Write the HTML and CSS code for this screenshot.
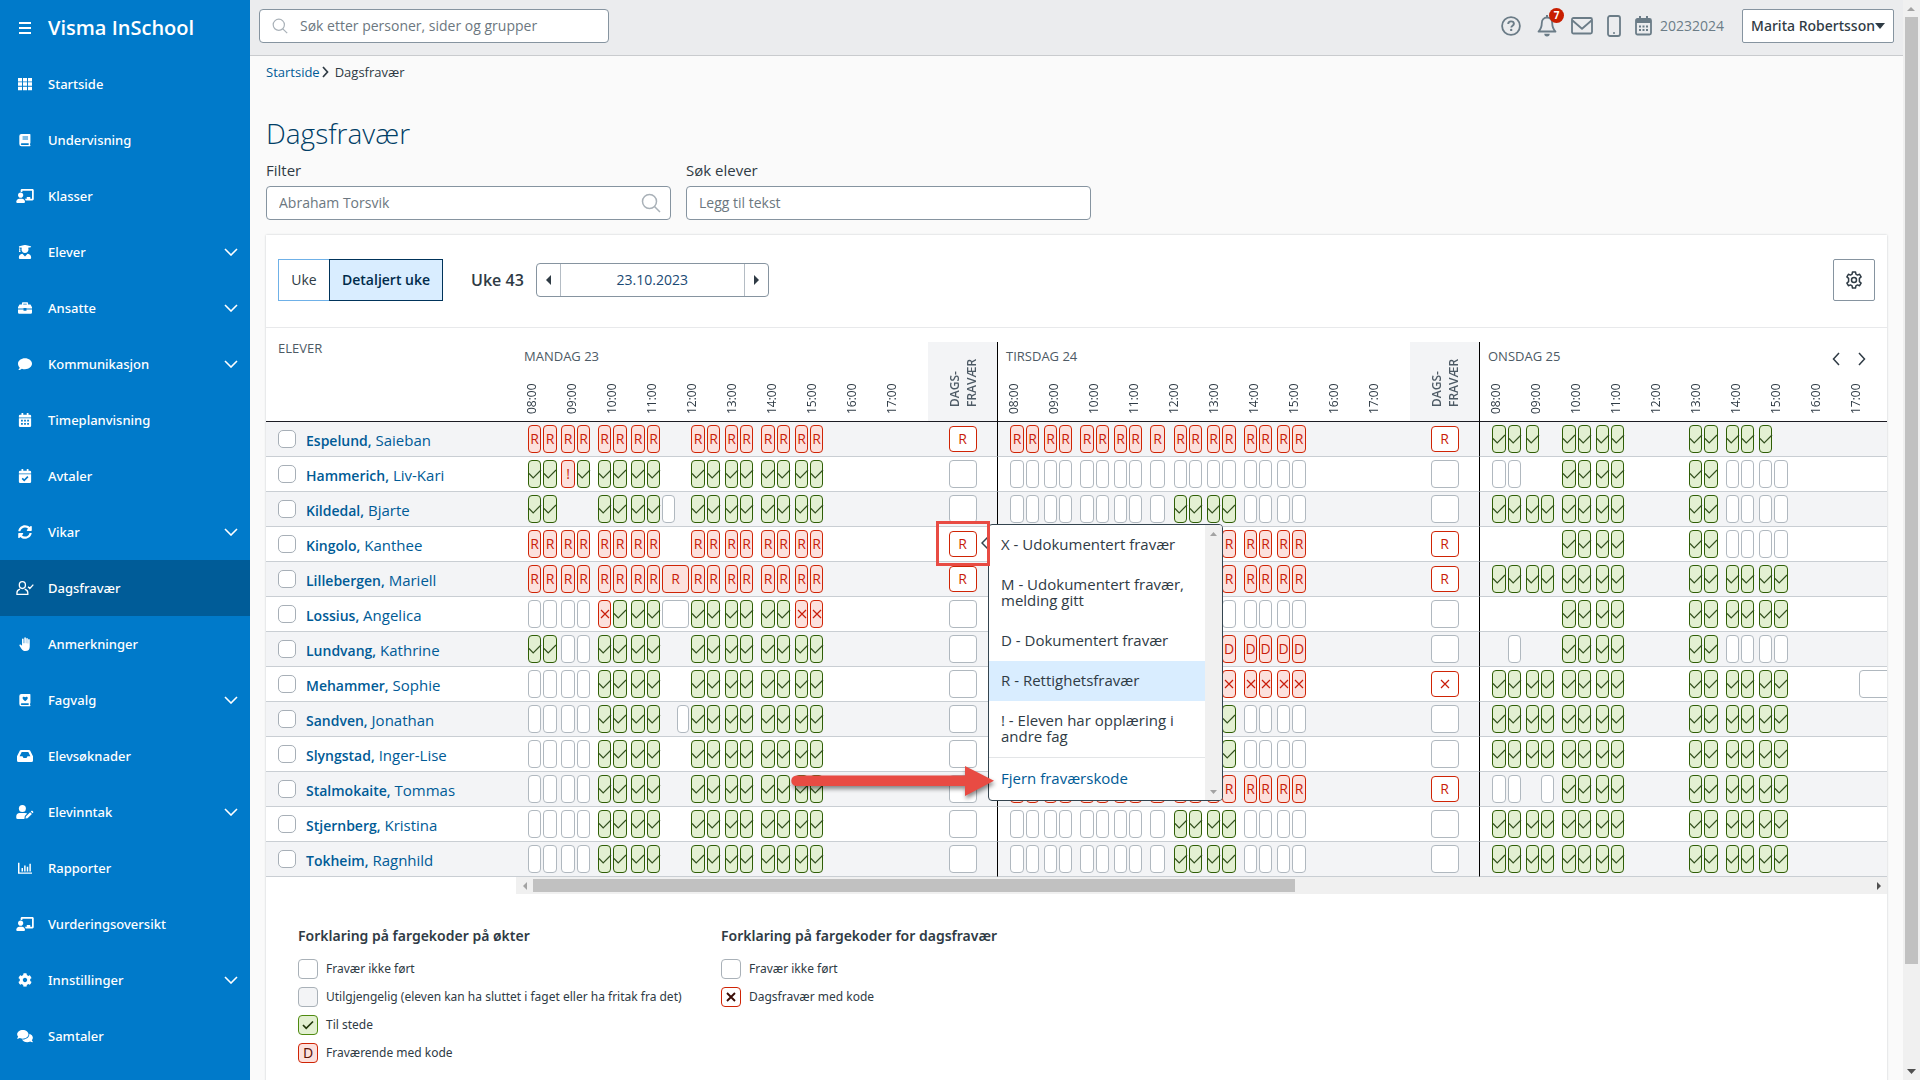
FILE: index.html
```html
<!DOCTYPE html>
<html lang="nb">
<head>
<meta charset="utf-8">
<title>Dagsfravær – Visma InSchool</title>
<link rel="stylesheet" href="styles.css">
</head>
<body>
<svg class="sprite" aria-hidden="true">
  <symbol id="i-grid" viewBox="0 0 16 16"><path d="M0 1h4.6v4H0zM5.7 1h4.6v4H5.7zM11.4 1H16v4h-4.600zM0 6h4.600v4H0zM5.700 6h4.600v4H5.700zM11.400 6H16v4h-4.600zM0 11h4.600v4H0zM5.700 11h4.600v4H5.700zM11.400 11H16v4h-4.600z"/></symbol>
  <symbol id="i-book" viewBox="0 0 16 16"><path fill-rule="evenodd" d="M4 1h9.500a.7.7 0 0 1 .7.7v9.600c0 .3-.2.5-.4.600v1.800c.3 0 .5.2.5.600 0 .4-.3.700-.7.700H4a2.500 2.500 0 0 1-2.500-2.500v-9A2.500 2.500 0 0 1 4 1zm1.200 3v1.100h6.300V4zm0 2.200v1.100h6.300V6.200zM4.200 11.800a.9.9 0 0 0 0 1.900h8v-1.900z"/></symbol>
  <symbol id="i-bookheart" viewBox="0 0 16 16"><path fill-rule="evenodd" d="M4 1h9.500a.7.7 0 0 1 .7.7v9.600c0 .3-.2.500-.4.600v1.800c.3 0 .5.2.5.600 0 .4-.3.700-.7.700H4a2.500 2.500 0 0 1-2.500-2.500v-9A2.500 2.500 0 0 1 4 1zm4.200 3.900c-.9-1.300-3-.8-3 .8 0 1.400 1.700 2.400 3 3.600 1.300-1.200 3-2.200 3-3.600 0-1.600-2.100-2.100-3-.8zM4.200 11.800a.9.9 0 0 0 0 1.900h8v-1.900z"/></symbol>
  <symbol id="i-board" viewBox="0 0 640 512"><path d="M208 352c-2.390 0-4.780.35-7.060 1.090C187.980 357.300 174.350 360 160 360c-14.350 0-27.980-2.700-40.950-6.910-2.280-.74-4.660-1.090-7.050-1.090C49.940 352-.33 402.480 0 464.620.14 490.880 21.730 512 48 512h224c26.270 0 47.860-21.120 48-47.380.33-62.140-49.940-112.620-112-112.620zm-48-32c53.020 0 96-42.980 96-96s-42.980-96-96-96-96 42.980-96 96 42.980 96 96 96zM592 0H208c-26.470 0-48 22.250-48 49.590V96c23.420 0 45.100 6.780 64 17.800V64h352v288h-64v-64H384v64h-76.240c19.100 16.690 33.120 38.730 39.690 64H592c26.470 0 48-22.250 48-49.590V49.590C640 22.250 618.470 0 592 0z"/></symbol>
  <symbol id="i-student" viewBox="0 0 448 512"><path d="M319.4 320.6L224 416l-95.400-95.400C57.100 323.700 0 382.200 0 454.400v9.600c0 26.500 21.500 48 48 48h352c26.500 0 48-21.500 48-48v-9.600c0-72.200-57.100-130.700-128.600-133.800zM13.600 79.800l6.400 1.500v58.400c-7 4.200-12 11.500-12 20.300 0 8.400 4.600 15.400 11.100 19.700L3.500 242c-1.700 6.900 2.100 14 7.600 14h41.800c5.500 0 9.300-7.100 7.600-14l-15.600-62.300C51.400 175.400 56 168.400 56 160c0-8.800-5-16.100-12-20.300V87.100l66 15.900c-8.600 17.200-14 36.400-14 57 0 70.700 57.300 128 128 128s128-57.300 128-128c0-20.600-5.300-39.800-14-57l96.300-23.200c18.200-4.400 18.200-27.100 0-31.500l-190.400-46c-13-3.100-26.700-3.100-39.700 0L13.600 48.200c-18.100 4.400-18.100 27.200 0 31.600z"/></symbol>
  <symbol id="i-case" viewBox="0 0 16 16"><path fill-rule="evenodd" d="M5.500 1.500h5a1 1 0 0 1 1 1V4h2.200c.4 0 .7.200.9.500L16 7v1.600H9.700V8H6.300v.6H0V7l1.400-2.500c.2-.3.500-.5.900-.5h2.200V2.500a1 1 0 0 1 1-1zM6 3v1h4V3zM0 9.800h6.300v1.400h3.400V9.800H16V13a1.500 1.500 0 0 1-1.500 1.500h-13A1.500 1.500 0 0 1 0 13z"/></symbol>
  <symbol id="i-comment" viewBox="0 0 16 16"><path d="M8 1.500c4.400 0 8 2.800 8 6.200s-3.600 6.200-8 6.200c-1.300 0-2.500-.2-3.600-.6C3.300 14.200 1.800 14.800.3 14.800c1-.9 1.500-2 1.600-2.900C.7 10.800 0 9.300 0 7.700c0-3.400 3.600-6.200 8-6.200z"/></symbol>
  <symbol id="i-cal" viewBox="0 0 16 16"><path fill-rule="evenodd" d="M4 0h2v2h4V0h2v2h1.500A1.500 1.500 0 0 1 15 3.500V5H1V3.500A1.500 1.500 0 0 1 2.500 2H4zM1 6h14v8.500a1.500 1.500 0 0 1-1.500 1.500h-11A1.500 1.500 0 0 1 1 14.500zm2.500 1.700v2h2v-2zm3.500 0v2h2v-2zm3.500 0v2h2v-2zm-7 3.800v2h2v-2zm3.500 0v2h2v-2zm3.500 0v2h2v-2z"/></symbol>
  <symbol id="i-calcheck" viewBox="0 0 16 16"><path d="M4 0h2v2h4V0h2v2h1.500A1.500 1.500 0 0 1 15 3.500V5H1V3.500A1.500 1.500 0 0 1 2.500 2H4zM1 6h14v8.500a1.500 1.500 0 0 1-1.500 1.500h-11A1.500 1.500 0 0 1 1 14.500z"/><path d="M4.800 10.700l2.300 2.300 4.200-4.300" fill="none" stroke="#007aca" stroke-width="1.800"/></symbol>
  <symbol id="i-sync" viewBox="0 0 512 512"><path d="M370.720 133.280C339.458 104.008 298.888 87.962 255.848 88c-77.458.068-144.328 53.178-162.791 126.850-1.344 5.363-6.122 9.150-11.651 9.150H24.103c-7.498 0-13.194-6.807-11.807-14.176C33.933 94.924 134.813 8 256 8c66.448 0 126.791 26.136 171.315 68.685L463.030 40.970C478.149 25.851 504 36.559 504 57.941V192c0 13.255-10.745 24-24 24H345.941c-21.382 0-32.090-25.851-16.971-40.971l41.750-41.749zM32 296h134.059c21.382 0 32.090 25.851 16.971 40.971l-41.750 41.750c31.262 29.273 71.835 45.319 114.876 45.280 77.418-.07 144.315-53.144 162.787-126.849 1.344-5.363 6.122-9.150 11.651-9.150h57.304c7.498 0 13.194 6.807 11.807 14.176C478.067 417.076 377.187 504 256 504c-66.448 0-126.791-26.136-171.315-68.685L48.970 471.030C33.851 486.149 8 475.441 8 454.059V320c0-13.255 10.745-24 24-24z"/></symbol>
  <symbol id="i-usercheck" viewBox="0 0 20 16"><g fill="none" stroke="currentColor" stroke-width="1.500"><ellipse cx="7" cy="4.700" rx="3.500" ry="3.900"/><path d="M4.300 9.300C2 10 .8 11.500.8 13.500v1.700h12.400v-1.700c0-2-1.200-3.500-3.500-4.200M13.500 6.500l2 2 4-4.300"/></g></symbol>
  <symbol id="i-hand" viewBox="0 0 16 16"><path d="M7.200 1.200a.9.900 0 0 1 1.800 0v6h.4V1.900a.9.900 0 0 1 1.800 0v5.600h.4V3.300a.9.900 0 0 1 1.800 0V11c0 3-1.600 5-4.800 5-2.300 0-3.500-.8-4.700-2.600L1.700 10c-.6-1 .7-2.100 1.600-1.200l1.300 1.300V2.600a.9.900 0 0 1 1.800 0v4.600h.8z"/></symbol>
  <symbol id="i-inbox" viewBox="0 0 16 14"><path fill-rule="evenodd" d="M4 1h8c.5 0 .9.200 1.100.6L16 7.200V11.500a1.500 1.500 0 0 1-1.500 1.500h-13A1.500 1.500 0 0 1 0 11.500V7.200l2.900-5.600C3.100 1.200 3.500 1 4 1zm.7 2L2.600 7.200h2.900l1 1.800h3l1-1.800h2.900L11.300 3z"/></symbol>
  <symbol id="i-useredit" viewBox="0 0 20 16"><circle cx="7" cy="4" r="4"/><path d="M4 9h6c1 0 1.800.3 2.500.8L9.800 12.600 9.300 16H1.500A1.500 1.500 0 0 1 0 14.500V13a4 4 0 0 1 4-4zM10.900 13.200l5-5 2 2-5 5-2.300.3zM16.600 7.500l.8-.8c.3-.3.700-.3 1 0l1 1c.3.300.3.700 0 1l-.8.800z"/></symbol>
  <symbol id="i-chart" viewBox="0 0 16 16"><path d="M0 2h1.700v11H16v1.700H0zM4 8h1.700v4H4zM7 5h1.700v7H7zM10 6.500h1.700V12H10zM13 3h1.700v9H13z"/></symbol>
  <symbol id="i-cog" viewBox="0 0 512 512"><path d="M487.400 315.700l-42.600-24.600c4.300-23.200 4.300-47 0-70.200l42.600-24.600c4.900-2.800 7.100-8.600 5.500-14-11.100-35.600-30-67.800-54.700-94.600-3.800-4.100-10-5.100-14.800-2.300L380.800 110c-17.900-15.400-38.500-27.300-60.800-35.100V25.800c0-5.600-3.900-10.500-9.400-11.700-36.700-8.200-74.300-7.800-109.200 0-5.500 1.200-9.400 6.100-9.400 11.700V75c-22.200 7.900-42.800 19.800-60.800 35.100L88.700 85.500c-4.900-2.800-11-1.900-14.800 2.300-24.700 26.700-43.600 58.900-54.700 94.600-1.700 5.400.6 11.200 5.500 14L67.300 221c-4.300 23.200-4.300 47 0 70.200l-42.600 24.600c-4.900 2.800-7.100 8.600-5.500 14 11.100 35.600 30 67.800 54.700 94.600 3.800 4.100 10 5.100 14.800 2.300l42.600-24.600c17.900 15.400 38.500 27.300 60.800 35.100v49.200c0 5.600 3.900 10.500 9.400 11.700 36.700 8.200 74.300 7.800 109.200 0 5.500-1.200 9.400-6.100 9.400-11.700v-49.200c22.200-7.900 42.800-19.800 60.800-35.100l42.600 24.600c4.900 2.800 11 1.900 14.800-2.300 24.700-26.700 43.600-58.900 54.700-94.600 1.500-5.500-.7-11.300-5.600-14.100zM256 336c-44.100 0-80-35.900-80-80s35.900-80 80-80 80 35.900 80 80-35.900 80-80 80z"/></symbol>
  <symbol id="i-comments" viewBox="0 0 576 512"><path d="M416 192c0-88.400-93.100-160-208-160S0 103.600 0 192c0 34.300 14.100 65.900 38 92-13.400 30.200-35.500 54.200-35.800 54.500-2.200 2.300-2.800 5.700-1.500 8.700S4.800 352 8 352c36.600 0 66.900-12.300 88.700-25 32.200 15.700 70.300 25 111.300 25 114.900 0 208-71.600 208-160zm122 220c23.900-26 38-57.700 38-92 0-66.900-53.500-124.200-129.300-148.100.9 6.600 1.300 13.300 1.300 20.100 0 105.900-107.700 192-240 192-10.800 0-21.300-.8-31.700-1.900C207.800 439.600 281.800 480 368 480c41 0 79.100-9.200 111.300-25 21.800 12.700 52.100 25 88.700 25 3.200 0 6.100-1.900 7.300-4.800 1.300-2.900.7-6.300-1.500-8.700-.3-.3-22.400-24.200-35.800-54.500z"/></symbol>
  <symbol id="i-down" viewBox="0 0 14 8"><path d="M1 1l6 6 6-6" fill="none" stroke="currentColor" stroke-width="1.600"/></symbol>
  <symbol id="i-search" viewBox="0 0 20 20"><g fill="none" stroke="currentColor" stroke-width="1.500"><circle cx="8.500" cy="8.500" r="7"/><path d="M13.500 13.500l5.500 5.500"/></g></symbol>
  <symbol id="i-check" viewBox="0 0 14 10"><path d="M1 4.500l4.200 4.300L13 1" fill="none" stroke="currentColor" stroke-width="1.200"/></symbol>
  <symbol id="i-checkbold" viewBox="0 0 14 10"><path d="M2 5l3.200 3.300L12 1.500" fill="none" stroke="currentColor" stroke-width="1.700"/></symbol>
  <symbol id="i-cross" viewBox="0 0 10 10"><path d="M1 1l8 8M9 1L1 9" fill="none" stroke="currentColor" stroke-width="1.200"/></symbol>
  <symbol id="i-crossbold" viewBox="0 0 10 10"><path d="M1 1l8 8M9 1L1 9" fill="none" stroke="currentColor" stroke-width="1.900"/></symbol>
  <symbol id="i-gear" viewBox="0 0 16 18"><g fill="none" stroke="currentColor" stroke-width="1.500" stroke-linejoin="round"><path d="M6.500 1h3l.4 2.200 1.600.9 2.100-.8 1.500 2.600-1.700 1.500v3.200l1.700 1.500-1.500 2.600-2.100-.8-1.600.9-.4 2.200h-3l-.4-2.200-1.600-.9-2.100.8L.9 12.100l1.700-1.500V7.400L.9 5.900l1.500-2.600 2.100.8 1.600-.9z"/><circle cx="8" cy="9" r="2.500"/></g></symbol>
</svg>

<div class="app">
  <aside class="sidebar">
    <div class="brand">
      <button class="burger" type="button" aria-label="Meny"><span></span><span></span><span></span></button>
      <span class="brand-name">Visma InSchool</span>
    </div>
    <nav class="nav">
      <a href="#"><svg class="ico"><use href="#i-grid"/></svg><span>Startside</span></a>
      <a href="#"><svg class="ico"><use href="#i-book"/></svg><span>Undervisning</span></a>
      <a href="#"><svg class="ico"><use href="#i-board"/></svg><span>Klasser</span></a>
      <a href="#"><svg class="ico"><use href="#i-student"/></svg><span>Elever</span><svg class="chev"><use href="#i-down"/></svg></a>
      <a href="#"><svg class="ico"><use href="#i-case"/></svg><span>Ansatte</span><svg class="chev"><use href="#i-down"/></svg></a>
      <a href="#"><svg class="ico"><use href="#i-comment"/></svg><span>Kommunikasjon</span><svg class="chev"><use href="#i-down"/></svg></a>
      <a href="#"><svg class="ico"><use href="#i-cal"/></svg><span>Timeplanvisning</span></a>
      <a href="#"><svg class="ico"><use href="#i-calcheck"/></svg><span>Avtaler</span></a>
      <a href="#"><svg class="ico"><use href="#i-sync"/></svg><span>Vikar</span><svg class="chev"><use href="#i-down"/></svg></a>
      <a href="#" class="active" aria-current="page"><svg class="ico"><use href="#i-usercheck"/></svg><span>Dagsfravær</span></a>
      <a href="#"><svg class="ico"><use href="#i-hand"/></svg><span>Anmerkninger</span></a>
      <a href="#"><svg class="ico"><use href="#i-bookheart"/></svg><span>Fagvalg</span><svg class="chev"><use href="#i-down"/></svg></a>
      <a href="#"><svg class="ico"><use href="#i-inbox"/></svg><span>Elevsøknader</span></a>
      <a href="#"><svg class="ico"><use href="#i-useredit"/></svg><span>Elevinntak</span><svg class="chev"><use href="#i-down"/></svg></a>
      <a href="#"><svg class="ico"><use href="#i-chart"/></svg><span>Rapporter</span></a>
      <a href="#"><svg class="ico"><use href="#i-board"/></svg><span>Vurderingsoversikt</span></a>
      <a href="#"><svg class="ico"><use href="#i-cog"/></svg><span>Innstillinger</span><svg class="chev"><use href="#i-down"/></svg></a>
      <a href="#"><svg class="ico"><use href="#i-comments"/></svg><span>Samtaler</span></a>
    </nav>
  </aside>

  <div class="page">
    <header class="topbar">
      <div class="field top-search">
        <svg class="mag"><use href="#i-search"/></svg>
        <input type="text" aria-label="Søk" placeholder="Søk etter personer, sider og grupper">
      </div>
      <div class="tools">
        <button type="button" aria-label="Hjelp"><svg width="20" height="20" viewBox="0 0 20 20"><circle cx="10" cy="10" r="8.900" fill="none" stroke="currentColor" stroke-width="1.800"/><path d="M7.200 8c0-1.600 1.200-2.600 2.800-2.600s2.900.9 2.900 2.400c0 1.900-2.600 2-2.600 3.700" fill="none" stroke="currentColor" stroke-width="1.900"/><circle cx="10.200" cy="13.900" r="1.200" fill="currentColor"/></svg></button>
        <button type="button" class="bell" aria-label="Varsler"><svg width="20" height="22" viewBox="0 0 20 22"><path d="M10 2.500c3.200 0 5.200 2.300 5.200 5.400 0 4.600 1 6.200 3.300 8.600h-17c2.300-2.400 3.300-4 3.300-8.600 0-3.100 2-5.400 5.200-5.400z" fill="none" stroke="currentColor" stroke-width="1.800" stroke-linejoin="round"/><path d="M9 0h2v3H9zM7.300 18.700h5.400a2.700 2.700 0 0 1-5.400 0z" fill="currentColor"/></svg><span class="badge">7</span></button>
        <button type="button" aria-label="Meldinger"><svg width="22" height="18" viewBox="0 0 22 18"><g fill="none" stroke="currentColor" stroke-width="1.800" stroke-linejoin="round"><rect x="1" y="1" width="20" height="15.500" rx="1.500"/><path d="M1.500 3.500L11 11.800l9.500-8.300"/></g></svg></button>
        <button type="button" aria-label="Mobil"><svg width="14" height="22" viewBox="0 0 14 22"><rect x="1" y="1" width="12" height="20" rx="2" fill="none" stroke="currentColor" stroke-width="1.800"/><circle cx="7" cy="18" r="1" fill="currentColor"/></svg></button>
        <button type="button" class="year"><svg width="17" height="20" viewBox="0 0 17 20"><rect x="1" y="3" width="15" height="15.500" rx="1.500" fill="none" stroke="currentColor" stroke-width="1.800"/><path d="M1 3h15v4H1zM4 0h2v4H4zM11 0h2v4h-2zM4 9.500h2v2H4zM7.500 9.500h2v2h-2zM11 9.500h2v2h-2zM4 13h2v2H4zM7.500 13h2v2h-2zM11 13h2v2h-2z" fill="currentColor"/></svg><span>20232024</span></button>
      </div>
      <button type="button" class="user"><span>Marita Robertsson</span><svg width="10" height="6" viewBox="0 0 10 6"><path d="M0 0h10L5 6z" fill="currentColor"/></svg></button>
    </header>

    <main class="content">
      <nav class="crumbs" aria-label="Brødsmuler"><a href="#">Startside</a><svg width="7" height="12" viewBox="0 0 7 12"><path d="M1 1l4.500 5L1 11" fill="none" stroke="currentColor" stroke-width="1.700"/></svg><span>Dagsfravær</span></nav>
      <h1>Dagsfravær</h1>
      <div class="filters">
        <div class="filter">
          <label for="filter">Filter</label>
          <div class="field"><input id="filter" type="text" placeholder="Abraham Torsvik"><svg class="mag big"><use href="#i-search"/></svg></div>
        </div>
        <div class="filter">
          <label for="elev">Søk elever</label>
          <div class="field"><input id="elev" type="text" placeholder="Legg til tekst"></div>
        </div>
      </div>

      <section class="card">
        <div class="toolbar">
          <div class="segment">
            <button type="button">Uke</button><button type="button" class="on">Detaljert uke</button>
          </div>
          <h2 class="week">Uke 43</h2>
          <div class="datebox">
            <button type="button" aria-label="Forrige uke"><svg width="5" height="10" viewBox="0 0 5 10"><path d="M5 0v10L0 5z" fill="currentColor"/></svg></button>
            <input type="text" aria-label="Dato" value="23.10.2023">
            <button type="button" aria-label="Neste uke"><svg width="5" height="10" viewBox="0 0 5 10"><path d="M0 0v10l5-5z" fill="currentColor"/></svg></button>
          </div>
          <button type="button" class="settings" aria-label="Innstillinger"><svg width="16" height="18"><use href="#i-gear"/></svg></button>
        </div>

        <div class="scroller">
          <table class="absence">
            <colgroup><col class="w-name"><col class="w-day"><col class="w-code"><col class="w-day"><col class="w-code"><col></colgroup>
            <thead>
              <tr>
                <th scope="col" class="h-name">ELEVER</th>
                <th scope="col" class="h-day"><div class="day-title">MANDAG 23</div><div class="hours"></div></th>
                <th scope="col" class="h-code"><span>DAGS-<br>FRAVÆR</span></th>
                <th scope="col" class="h-day"><div class="day-title">TIRSDAG 24</div><div class="hours"></div></th>
                <th scope="col" class="h-code"><span>DAGS-<br>FRAVÆR</span></th>
                <th scope="col" class="h-day"><div class="day-title">ONSDAG 25<span class="paging"><button type="button" aria-label="Forrige dag"><svg width="8" height="14" viewBox="0 0 8 14"><path d="M7 1L1.500 7 7 13" fill="none" stroke="currentColor" stroke-width="1.500"/></svg></button><button type="button" aria-label="Neste dag"><svg width="8" height="14" viewBox="0 0 8 14"><path d="M1 1l5.500 6L1 13" fill="none" stroke="currentColor" stroke-width="1.500"/></svg></button></span></div><div class="hours"></div></th>
              </tr>
            </thead>
            <tbody>
              <tr data-mon="RRRRRRRR...RRRRRRRR|R" data-tue="RRRRRRRRRRRRRRRRR|R" data-wed="VVV.VVVVVVVVV.."><th scope="row"><label><input type="checkbox"><a href="#"><b>Espelund,</b> Saieban</a></label></th></tr>
              <tr data-mon="VV!VVVVV...VVVVVVVV|o" data-tue="ooooooooooooooooo|o" data-wed="oo..VVVVVVoooo."><th scope="row"><label><input type="checkbox"><a href="#"><b>Hammerich,</b> Liv-Kari</a></label></th></tr>
              <tr data-mon="VV..VVVVo..VVVVVVVV|o" data-tue="oooooooooVVVVoooo|o" data-wed="VVVVVVVVVVoooo."><th scope="row"><label><input type="checkbox"><a href="#"><b>Kildedal,</b> Bjarte</a></label></th></tr>
              <tr id="open-row" data-mon="RRRRRRRR...RRRRRRRR|R" data-tue="............RRRRR|R" data-wed="....VVVVVVoooo."><th scope="row"><label><input type="checkbox"><a href="#"><b>Kingolo,</b> Kanthee</a></label></th></tr>
              <tr data-mon="RRRRRRRR.R.RRRRRRRR|R" data-tue="............RRRRR|R" data-wed="VVVVVVVVVVVVVV."><th scope="row"><label><input type="checkbox"><a href="#"><b>Lillebergen,</b> Mariell</a></label></th></tr>
              <tr data-mon="ooooXVVV.o.VVVVVVXX|o" data-tue="ooooooooooooooooo|o" data-wed="....VVVVVVVVVV."><th scope="row"><label><input type="checkbox"><a href="#"><b>Lossius,</b> Angelica</a></label></th></tr>
              <tr data-mon="VVooVVVV...VVVVVVVV|o" data-tue="............DDDDD|o" data-wed=".o..VVVVVVoooo."><th scope="row"><label><input type="checkbox"><a href="#"><b>Lundvang,</b> Kathrine</a></label></th></tr>
              <tr data-mon="ooooVVVV...VVVVVVVV|o" data-tue="............XXXXX|X" data-wed="VVVVVVVVVVVVVVo"><th scope="row"><label><input type="checkbox"><a href="#"><b>Mehammer,</b> Sophie</a></label></th></tr>
              <tr data-mon="ooooVVVV..oVVVVVVVV|o" data-tue="oooooooooVVVVoooo|o" data-wed="VVVVVVVVVVVVVV."><th scope="row"><label><input type="checkbox"><a href="#"><b>Sandven,</b> Jonathan</a></label></th></tr>
              <tr data-mon="ooooVVVV...VVVVVVVV|o" data-tue="oooooooooVVVVoooo|o" data-wed="VVVVVVVVVVVVVV."><th scope="row"><label><input type="checkbox"><a href="#"><b>Slyngstad,</b> Inger-Lise</a></label></th></tr>
              <tr data-mon="ooooVVVV...VVVVVVVV|o" data-tue="aaaaaaaaaaaaRRRRR|R" data-wed="oo.oVVVVVVVVVV."><th scope="row"><label><input type="checkbox"><a href="#"><b>Stalmokaite,</b> Tommas</a></label></th></tr>
              <tr data-mon="ooooVVVV...VVVVVVVV|o" data-tue="oooooooooVVVVoooo|o" data-wed="VVVVVVVVVVVVVV."><th scope="row"><label><input type="checkbox"><a href="#"><b>Stjernberg,</b> Kristina</a></label></th></tr>
              <tr data-mon="ooooVVVV...VVVVVVVV|o" data-tue="oooooooooVVVVoooo|o" data-wed="VVVVVVVVVVVVVV."><th scope="row"><label><input type="checkbox"><a href="#"><b>Tokheim,</b> Ragnhild</a></label></th></tr>
            </tbody>
          </table>
        </div>
        <div class="hbar" aria-hidden="true">
          <svg width="17" height="17"><path d="M11 5v8L7 9z" fill="#a3a3a3"/></svg>
          <div class="hbar-rail"><div class="hbar-thumb"></div></div>
          <svg width="17" height="17"><path d="M7 5v8l4-4z" fill="#505050"/></svg>
        </div>

        <div class="legends">
          <div class="legend">
            <h3>Forklaring på fargekoder på økter</h3>
            <ul>
              <li><span class="key"></span>Fravær ikke ført</li>
              <li><span class="key off"></span>Utilgjengelig (eleven kan ha sluttet i faget eller ha fritak fra det)</li>
              <li><span class="key ok"><svg width="14" height="10"><use href="#i-checkbold"/></svg></span>Til stede</li>
              <li><span class="key absent">D</span>Fraværende med kode</li>
            </ul>
          </div>
          <div class="legend">
            <h3>Forklaring på fargekoder for dagsfravær</h3>
            <ul>
              <li><span class="key"></span>Fravær ikke ført</li>
              <li><span class="key coded"><svg width="10" height="10"><use href="#i-crossbold"/></svg></span>Dagsfravær med kode</li>
            </ul>
          </div>
        </div>
      </section>
    </main>
  </div>

  <div class="vbar" aria-hidden="true">
    <svg width="17" height="17"><path d="M4 11h8L8 7z" fill="#a3a3a3"/></svg>
    <div class="vbar-rail"><div class="vbar-thumb"></div></div>
    <svg width="17" height="17"><path d="M4 6h9l-4.500 5z" fill="#505050"/></svg>
  </div>
</div>

<template id="code-menu">
  <div class="menu-wrap">
    <svg class="pointer" width="8" height="14" viewBox="0 0 8 14"><path d="M8 0L1 7l7 7" fill="#fff" stroke="#34444f" stroke-width="1.500"/></svg>
    <div class="menu" role="menu">
      <div class="menu-list">
        <button type="button" role="menuitem">X - Udokumentert fravær</button>
        <button type="button" role="menuitem">M - Udokumentert fravær, melding gitt</button>
        <button type="button" role="menuitem">D - Dokumentert fravær</button>
        <button type="button" role="menuitem" class="current">R - Rettighetsfravær</button>
        <button type="button" role="menuitem">! - Eleven har opplæring i andre fag</button>
        <button type="button" role="menuitem" class="remove">Fjern fraværskode</button>
      </div>
      <div class="menu-bar" aria-hidden="true">
        <svg width="17" height="17"><path d="M5 11h7L8.500 7z" fill="#a3a3a3"/></svg>
        <svg width="17" height="17"><path d="M5 7h7l-3.500 4z" fill="#a3a3a3"/></svg>
      </div>
    </div>
  </div>
  <span class="highlight"></span>
  <svg class="arrow" width="208" height="40" viewBox="0 0 208 40"><path d="M5.500 9.500H174V0L203 14.800 174 30V20H5.500a5.200 5.200 0 0 1 0-10.500z" fill="#e84b43"/></svg>
</template>
<script src="app.js"></script>
</body>
</html>
```
FILE: styles.css
```css
* { box-sizing: border-box; }
body { margin: 0; font: 400 14px/20px "Open Sans", "Noto Sans", sans-serif; color: #2f3b45; background: #fafafa; }
button, input { font: inherit; color: inherit; margin: 0; }
button { background: none; border: 0; padding: 0; cursor: pointer; }
a { color: #005b96; text-decoration: none; }
h1, h2, h3, ul { margin: 0; padding: 0; }
svg { display: block; fill: currentColor; flex: none; }
.sprite { display: none; }

.app { display: flex; height: 100vh; overflow: hidden; }

/* sidebar */
.sidebar { width: 250px; flex: none; background: #007aca; color: #fff; }
.brand { display: flex; align-items: center; height: 56px; padding-left: 19px; gap: 17px; }
.burger { width: 12px; display: grid; gap: 3px; }
.burger span { height: 2px; background: #fff; }
.brand-name { font-size: 20px; font-weight: 600; line-height: 28px; }
.nav a { display: flex; align-items: center; height: 56px; padding: 0 12px 0 16px; color: #fff; font-family: "Noto Sans", sans-serif; font-size: 13px; font-weight: 500; }
.nav a.active { background: #005c98; }
.nav .ico { width: 18px; height: 14px; margin-right: 14px; }
.nav .chev { width: 14px; height: 8px; margin-left: auto; }

/* top bar */
.page { flex: 1; min-width: 0; display: flex; flex-direction: column; }
.topbar { display: flex; align-items: center; height: 56px; flex: none; padding: 0 9px 3px; background: #ebecee; border-bottom: 1px solid #c9cbce; }
.field { display: flex; align-items: center; gap: 12px; height: 34px; padding: 0 12px; background: #fff; border: 1px solid #8694a0; border-radius: 4px; }
.field input { flex: 1; min-width: 0; border: 0; padding: 0; background: none; outline: 0; }
.field input::placeholder { color: #6c7780; opacity: 1; }
.top-search { width: 350px; }
.mag { width: 16px; height: 16px; color: #a9b1b8; }
.filter .field { padding-right: 9px; }
.mag.big { width: 20px; height: 20px; }
.tools { display: flex; align-items: center; margin-left: auto; gap: 14px; color: #6b7c87; }
.bell { position: relative; margin-left: 2px; }
.badge { position: absolute; top: -7px; right: -7px; width: 15px; height: 15px; border-radius: 8px; background: #c81e00; color: #fff; font-size: 10px; font-weight: 700; line-height: 15px; text-align: center; }
.year { display: flex; align-items: center; gap: 8px; }
.user { display: flex; align-items: center; height: 34px; margin-left: 18px; padding: 0 8px; background: #fff; border: 1px solid #8694a0; border-radius: 2px; font-family: "Noto Sans", sans-serif; font-weight: 500; }

/* content */
.content { flex: 1; display: flex; flex-direction: column; padding: 6px 16px 0; }
.crumbs { display: flex; align-items: center; gap: 2px; font-size: 13px; }
.crumbs span { margin-left: 4px; }
h1 { margin-top: 33px; font-size: 28px; font-weight: 300; line-height: 36px; color: #003e66; }
.filters { display: flex; gap: 15px; margin-top: 9px; }
.filter { width: 405px; }
.filter label { display: block; margin-bottom: 6px; font-size: 15px; }
.card { flex: 1; margin-top: 15px; background: #fff; box-shadow: 0 0 2px #c8cbce; }
.toolbar { display: flex; align-items: center; padding: 24px 12px 26px; border-bottom: 1px solid #e8e9eb; }
.segment { display: flex; }
.segment button { height: 42px; min-width: 51px; padding: 0 12px; border: 1px solid #6fb1e8; border-right: 0; }
.segment .on { border: 1px solid #00335a; background: #d9edff; color: #002b4a; font-weight: 600; }
.week { margin-left: 28px; font-size: 16px; font-weight: 600; }
.datebox { display: flex; width: 233px; height: 34px; margin-left: 12px; border: 1px solid #8694a0; border-radius: 4px; }
.datebox button { width: 23px; display: grid; place-items: center; }
.datebox input { flex: 1; min-width: 0; padding: 0; border: 1px solid #b4bcc4; border-width: 0 1px; text-align: center; color: #1b4a74; }
.settings { width: 42px; height: 42px; margin-left: auto; display: grid; place-items: center; border: 1px solid #8694a0; border-radius: 2px; }

/* absence table */
.scroller { overflow: hidden; padding-top: 14px; }
.absence { width: 100%; table-layout: fixed; border-collapse: separate; border-spacing: 0; }
.w-name { width: 250px; }
.w-day { width: 412px; }
.w-code { width: 70px; }
.absence th, .absence td { padding: 0; text-align: left; font-weight: 400; vertical-align: top; }
thead th { height: 80px; border-bottom: 1px solid #1c1c24; font-size: 13px; color: #4d5a65; }
tbody tr:nth-child(odd) { background: #f3f4f6; }
tbody th, tbody td { height: 35px; border-bottom: 1px solid #c9ced3; }
.absence .h-name { padding-left: 12px; line-height: 12px; }
.day-title { display: flex; justify-content: space-between; height: 30px; padding: 4px 21px 0 8px; }
.paging { display: flex; align-items: flex-start; gap: 18px; padding-top: 6px; color: #2f3b45; }
.hours { display: flex; gap: 22px; padding: 11px 0 0 7px; }
.hours span { flex: none; width: 18px; height: 31px; writing-mode: vertical-rl; transform: rotate(180deg); font-size: 12px; line-height: 18px; color: #2f3b45; }
.absence .h-code { background: #f3f4f6; border-right: 1px solid #000; }
.h-code span { display: block; width: 34px; height: 50px; margin: 15px auto 0; writing-mode: vertical-rl; transform: rotate(180deg); font-size: 12px; font-weight: 600; line-height: 17px; }
tbody label { display: flex; align-items: center; gap: 10px; height: 34px; padding-left: 12px; }
tbody label a { padding-top: 2px; font-size: 15px; }
tbody b { font-size: 14px; font-weight: 600; }
tbody input { appearance: none; width: 18px; height: 18px; background: #fff; border: 1px solid #a7afb7; border-radius: 5px; }
.slots { display: grid; grid-template-columns: repeat(412, 1px); padding-top: 3px; overflow: hidden; }
.mark { grid-row: 1; height: 28px; display: flex; align-items: center; justify-content: center; background: #fff; border: 1px solid #b0b8bf; border-radius: 4px; font-weight: 500; }
.mark.present { background: #e3f0d2; border-color: #2f5e06; color: #33501f; }
.mark.absent { background: #fce1dd; border-color: #cf2405; color: #c91d0a; }
.code { position: relative; border-right: 1px solid #000; }
.code .mark { width: 28px; margin: 3px auto 0; }
.code .mark.coded { height: 26px; margin-top: 4px; border-color: #cf2405; color: #c91d0a; }

/* code menu and annotations over the table */
.menu-wrap { position: absolute; z-index: 2; left: 60px; top: -3px; }
.menu { display: flex; width: 235px; background: #fff; border: 1px solid #34444f; border-radius: 4px; overflow: hidden; }
.menu-list { flex: 1; }
.menu-list button { display: block; width: 100%; padding: 11px 12px 13px; font-size: 15px; line-height: 16px; text-align: left; }
.menu-list .current { background: #d9edff; }
.menu-list .remove { padding: 12px 12px 14px; border-top: 1px solid #e3e5e7; color: #005b96; }
.menu-bar { display: flex; flex-direction: column; justify-content: space-between; width: 17px; background: #f0f0f0; }
.pointer { position: absolute; left: -7px; top: 12px; }
.highlight { position: absolute; z-index: 3; left: 8px; top: -6px; width: 54px; height: 45px; border: 3px solid #e84b43; }
.arrow { position: absolute; z-index: 3; left: -137px; top: 239px; filter: drop-shadow(1px 3px 2px rgba(0, 0, 0, .45)); }

/* scroll bars */
.hbar { display: flex; height: 17px; margin-left: 250px; background: #f0f0f0; }
.hbar-rail { flex: 1; padding: 2px 0; }
.hbar-thumb { width: 57%; height: 13px; background: #c1c1c1; }
.vbar { display: flex; flex-direction: column; width: 17px; flex: none; background: #f0f0f0; }
.vbar-rail { flex: 1; padding: 0 2px; }
.vbar-thumb { width: 13px; height: 90.5%; background: #c1c1c1; }

/* legend */
.legends { display: flex; gap: 32px; padding: 32px; font-family: "Noto Sans", sans-serif; }
.legend { min-width: 391px; }
.legend h3 { font-size: 14px; font-weight: 600; }
.legend ul { display: grid; gap: 8px; margin-top: 13px; list-style: none; font-size: 12px; }
.legend li { display: flex; align-items: center; gap: 8px; }
.key { display: grid; place-items: center; width: 20px; height: 20px; border: 1px solid #a9b1b8; border-radius: 4px; font-size: 14px; line-height: 18px; }
.key.off { background: #f3f4f6; }
.key.ok { background: #e3f0d2; border-color: #4f8a10; color: #22380c; }
.key.absent { background: #fce1dd; border-color: #cf2405; color: #5c1408; }
.key.coded { border-color: #cf2405; color: #3a0c06; }
```
FILE: app.js
```js
// Lesson slots on the day's timeline, as [start, end] in timeline units (40 per hour).
const morning = [[12, 26], [28, 41], [46, 59], [61, 74], [82, 96], [98, 111], [116, 129], [131, 144]];
const afternoon = [[176, 189], [191, 204], [209, 222], [224, 238], [246, 259], [261, 274], [279, 292], [294, 308]];
const slots = {
  mon: [[12, 25], [27, 41], [45, 59], [61, 74], [82, 95], [97, 111], [115, 129], [131, 144],
        [146, 159], [146, 173], [161, 173],
        [175, 189], [191, 204], [209, 222], [224, 237], [245, 259], [261, 274], [279, 292], [294, 307]],
  tue: [...morning, [152, 167], ...afternoon],
  wed: [...morning, ...afternoon.slice(2), [379, 412]],
};
// V = present, X / R / D / ! = absence codes, a = absent without code, o = not registered
const svg = (id, w, h) => `<svg width="${w}" height="${h}"><use href="#${id}"/></svg>`;
const content = c => c === 'V' ? svg('i-check', 14, 10) : c === 'X' ? svg('i-cross', 10, 10) : 'oa'.includes(c) ? '' : c;
const kind = c => c === 'V' ? 'present' : c === 'o' ? '' : 'absent';
const names = { V: 'Til stede', o: 'Fravær ikke ført', a: 'Fraværende' };

function mark(c, cls) {
  const b = document.createElement('button');
  b.type = 'button';
  b.className = ('mark ' + cls).trim();
  b.setAttribute('aria-label', names[c] || 'Fravær ' + c);
  b.innerHTML = content(c);
  return b;
}

document.querySelectorAll('.hours').forEach(h => {
  for (let t = 8; t <= 17; t++) {
    const s = document.createElement('span');
    s.textContent = String(t).padStart(2, '0') + ':00';
    h.append(s);
  }
});

document.querySelectorAll('tbody tr').forEach(tr => {
  for (const day of ['mon', 'tue', 'wed']) {
    const [marks, code] = tr.dataset[day].split('|');
    const td = document.createElement('td');
    const box = document.createElement('div');
    box.className = 'slots';
    [...marks].forEach((c, i) => {
      if (c === '.') return;
      const m = mark(c, kind(c));
      const [from, to] = slots[day][i];
      m.style.gridColumn = `${from + 1} / ${to + 1}`;
      box.append(m);
    });
    td.append(box);
    tr.append(td);
    if (code) {
      const cell = document.createElement('td');
      cell.className = 'code';
      cell.append(mark(code, code === 'o' ? '' : 'coded'));
      tr.append(cell);
    }
  }
});

document.querySelector('#open-row .code').append(document.getElementById('code-menu').content.cloneNode(true));
```
